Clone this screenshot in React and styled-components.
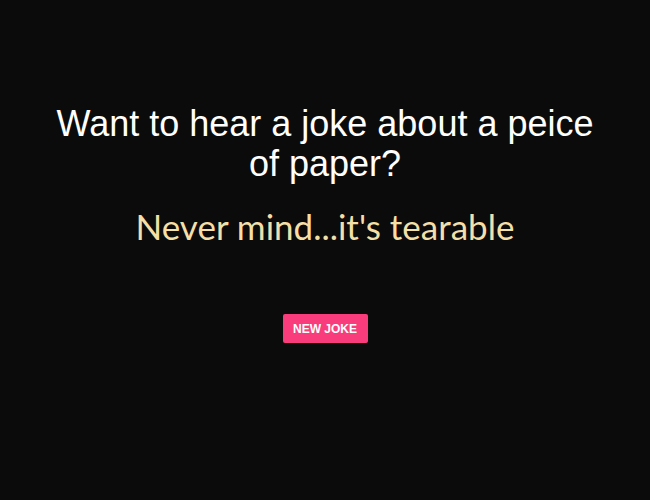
import React from 'react'
import styled, { createGlobalStyle } from 'styled-components'

const GlobalStyle = createGlobalStyle`
  html, body {
    margin: 0;
    padding: 0;
    background: #0b0b0b;
  }
`

const App = () => (
  <>
    <GlobalStyle />
    <Page>
      <Question>Want to hear a joke about a peice of paper?</Question>
      <Punchline>Never mind...it's tearable</Punchline>
      <JokeButton>New Joke</JokeButton>
    </Page>
  </>
)

export default App

const Page = styled.div`
  width: 650px;
  height: 500px;
  box-sizing: border-box;
  padding: 104px 40px 0;
  display: flex;
  flex-direction: column;
  align-items: center;
  background: #0b0b0b;
`

const Question = styled.h1`
  margin: 0;
  max-width: 560px;
  font-family: "Liberation Sans", Arial, sans-serif;
  font-weight: 400;
  font-size: 36px;
  line-height: 40px;
  color: #ffffff;
  text-align: center;
`

const Punchline = styled.h2`
  margin: 22px 0 0;
  font-family: Lato, "Open Sans", sans-serif;
  font-weight: 400;
  font-size: 35px;
  line-height: 40px;
  color: #f4dfa8;
  text-align: center;
`

const JokeButton = styled.button`
  margin-top: 68px;
  width: 85px;
  height: 29px;
  border: none;
  border-radius: 2px;
  background: #f93d7c;
  color: #ffffff;
  font-family: "Liberation Sans", Arial, sans-serif;
  font-weight: 700;
  font-size: 12px;
  text-transform: uppercase;
  cursor: pointer;
`
